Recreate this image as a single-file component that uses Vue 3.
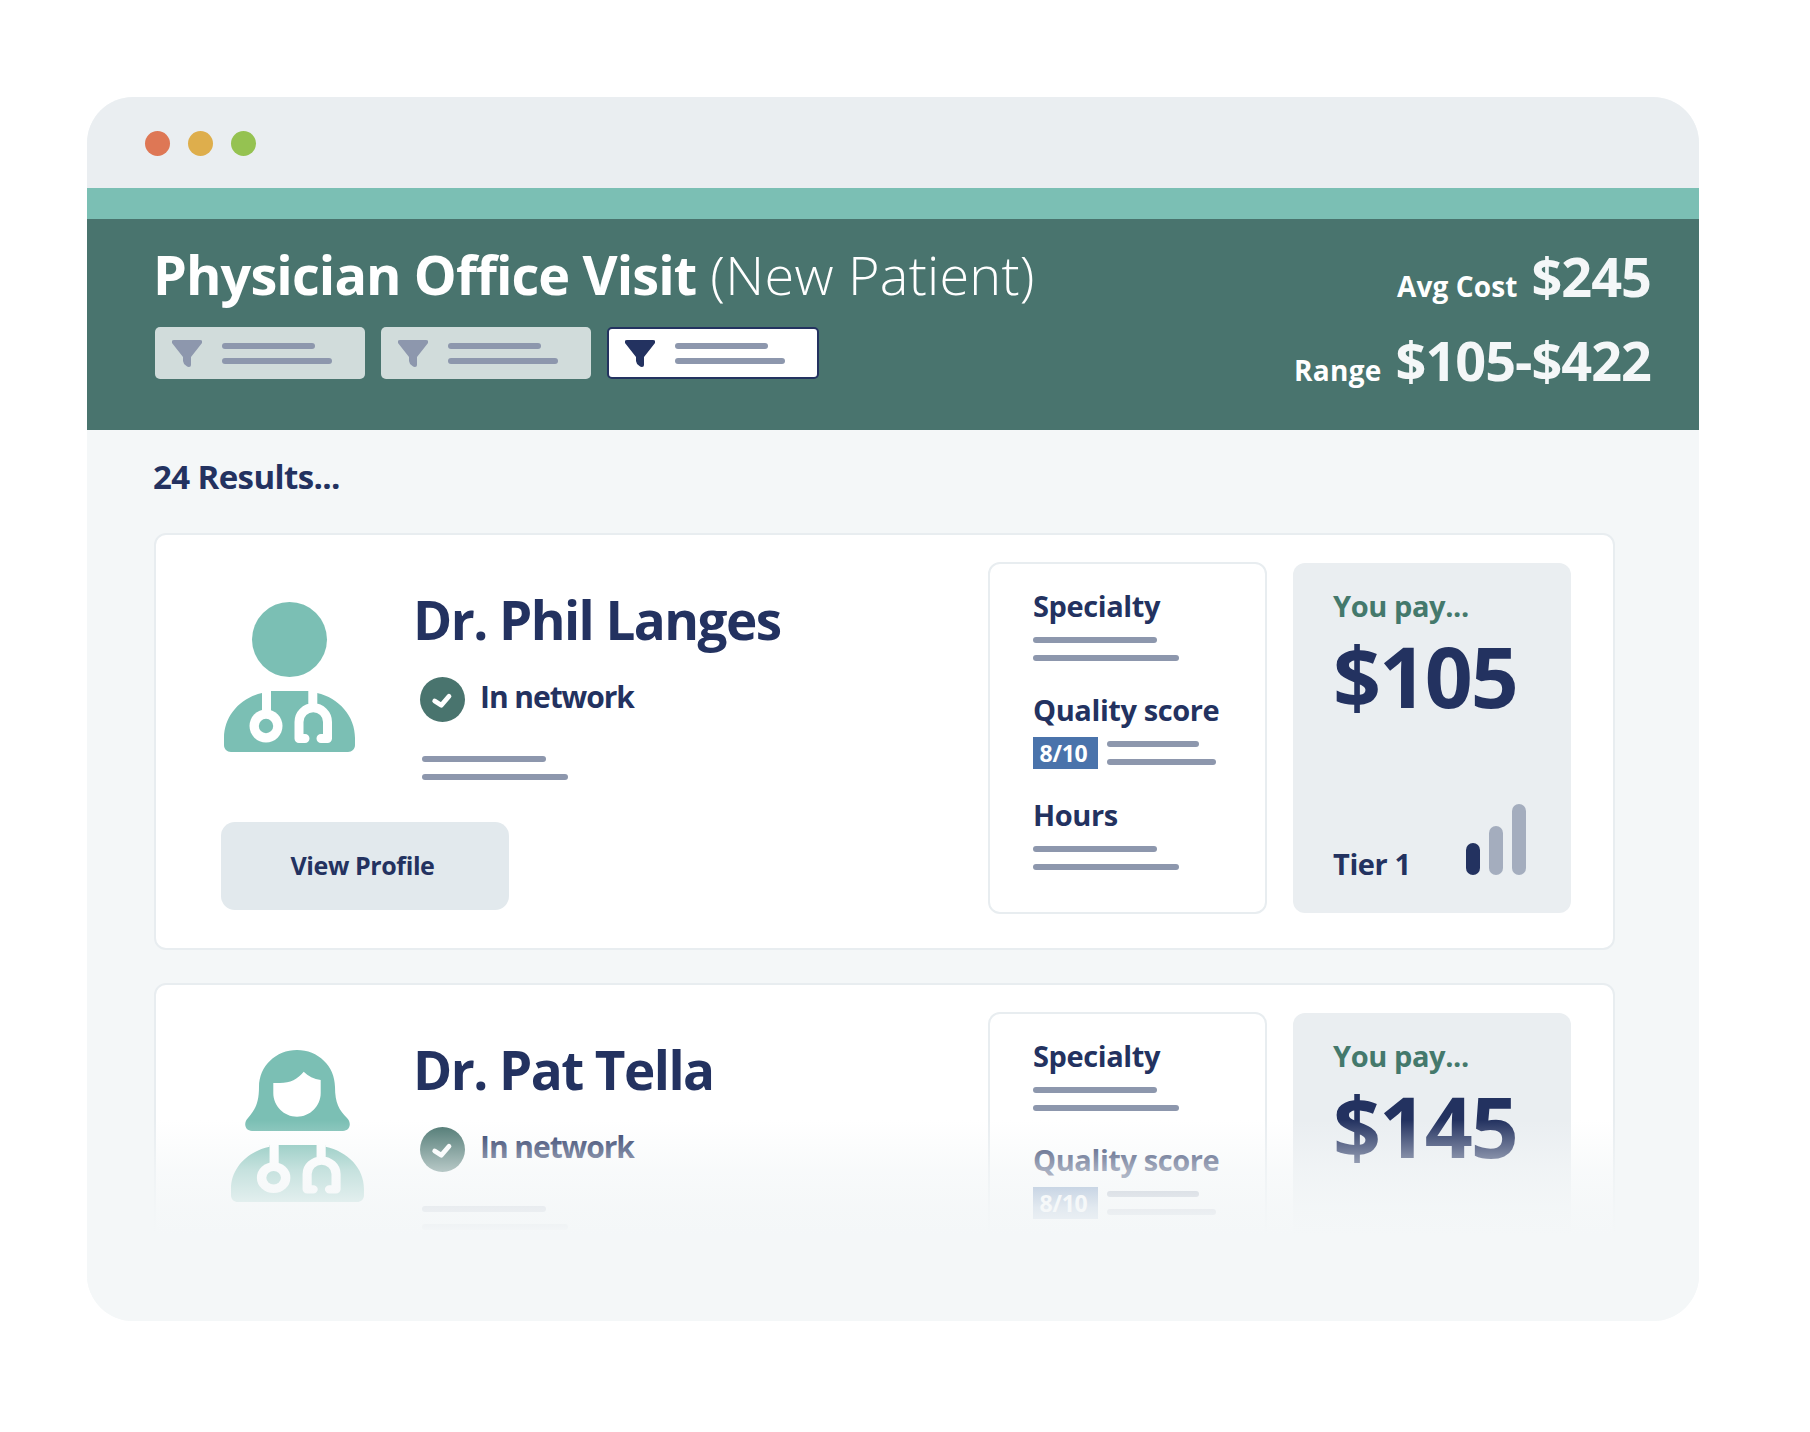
<template>
  <div class="page">
    <div class="window">
      <div class="titlebar">
        <span class="dot red"></span>
        <span class="dot amber"></span>
        <span class="dot green"></span>
      </div>
      <div class="strip"></div>

      <header class="header">
        <div class="header-left">
          <h1 class="title"><b>Physician Office Visit</b> <span>(New Patient)</span></h1>
          <div class="chips">
            <div v-for="n in 3" :key="n" class="chip" :class="{ active: n === 3 }">
              <svg class="funnel" width="30" height="27" viewBox="0 0 30 27">
                <path d="M2 0H28Q31 0 30 3L19 17V25Q19 27 17 27Q15.500 27 14.500 26Q11 23.500 11 21V17L0 3Q-1 0 2 0Z" />
              </svg>
              <div class="chip-lines">
                <i class="ln a"></i>
                <i class="ln b"></i>
              </div>
            </div>
          </div>
        </div>
        <div class="stats">
          <div class="stat one"><span>Avg Cost</span><b>$245</b></div>
          <div class="stat two"><span>Range</span><b>$105-$422</b></div>
        </div>
      </header>

      <main class="results">
        <h2 class="count">24 Results...</h2>

        <section v-for="doc in doctors" :key="doc.name" class="card">
          <div class="doc">
            <div class="doc-top">
              <svg class="avatar" width="146" height="170" :viewBox="doc.female ? '221 1040 146 170' : '221 590 146 170'">
                <template v-if="doc.female">
                  <path class="teal" d="M259 1087C259 1066 276 1050 297 1050C318 1050 335 1066 335 1087C335 1103 339 1110 347 1118C352 1123 350 1131 343 1131H252C245 1131 243 1123 248 1118C255 1110 259 1103 259 1087Z" />
                  <path class="wht" d="M273.300 1083H280C290 1083 298 1079 303.700 1071.700C308 1076 314 1079 320.700 1080V1093C320.700 1106 310 1116.700 297 1116.700C284 1116.700 273.300 1106 273.300 1093Z" />
                </template>
                <circle v-else class="teal" cx="289.500" cy="639.500" r="37.500" />
                <g :transform="doc.female ? 'translate(231 1145) scale(1.015 .934) translate(-224 -691)' : ''">
                  <path class="teal" d="M224 738C224 716 240 698 262 693V691H317V693C339 698 355 716 355 738V745C355 749 352 752 348 752H231C227 752 224 749 224 745Z" />
                  <path class="steth" d="M266.500 688V712M312.800 688V707M305 738.500H299V722A14.250 14.250 0 0 1 327.500 722V738.500H321" />
                  <circle class="wht" cx="266" cy="726" r="16.500" />
                  <circle class="teal" cx="266" cy="726" r="7.200" />
                </g>
              </svg>
              <div class="info">
                <h3 class="name">{{ doc.name }}</h3>
                <div class="network">
                  <svg width="45" height="45" viewBox="0 0 45 45">
                    <circle cx="22.500" cy="22.500" r="22.500" fill="#49746e" />
                    <path d="M14.700 24L21.300 28.300L29 19.300" fill="none" stroke="#fff" stroke-width="4.800" stroke-linecap="round" stroke-linejoin="round" />
                  </svg>
                  <span>In network</span>
                </div>
                <div class="lines">
                  <i class="ln l1"></i>
                  <i class="ln l2"></i>
                </div>
              </div>
            </div>
            <!-- the second card runs under the fade, its lower part never shows -->
            <button v-if="!doc.faded" class="profile">View Profile</button>
          </div>

          <div class="details">
            <div class="sec">
              <h4>Specialty</h4>
              <div class="lines">
                <i class="ln l1"></i>
                <i class="ln l2"></i>
              </div>
            </div>
            <div class="sec">
              <h4>Quality score</h4>
              <div class="quality">
                <span class="badge">{{ doc.score }}</span>
                <div class="lines tight">
                  <i class="ln q1"></i>
                  <i class="ln q2"></i>
                </div>
              </div>
            </div>
            <div v-if="!doc.faded" class="sec">
              <h4>Hours</h4>
              <div class="lines">
                <i class="ln l1"></i>
                <i class="ln l2"></i>
              </div>
            </div>
          </div>

          <div class="pay">
            <div class="pay-label">You pay...</div>
            <div class="pay-value">{{ doc.price }}</div>
            <div v-if="!doc.faded" class="tier">
              <span>{{ doc.tier }}</span>
              <div class="bars">
                <i class="on" style="height: 32px"></i>
                <i style="height: 49px"></i>
                <i style="height: 71px"></i>
              </div>
            </div>
          </div>
        </section>

        <div class="fade"></div>
      </main>
    </div>
  </div>
</template>

<script setup>
const doctors = [
  { name: 'Dr. Phil Langes', score: '8/10', price: '$105', tier: 'Tier 1', female: false, faded: false },
  { name: 'Dr. Pat Tella', score: '8/10', price: '$145', tier: 'Tier 1', female: true, faded: true },
]
</script>

<style>
html, body { background: #fff; }
</style>

<style scoped>
* { box-sizing: border-box; }
.page {
  width: 1810px;
  height: 1432px;
  padding: 97px 111px 0 87px;
  background: #fff;
  font-family: "Open Sans", "Liberation Sans", sans-serif;
  color: #233260;
  overflow: hidden;
}
.window {
  width: 1612px;
  height: 1224px;
  border-radius: 46px;
  overflow: hidden;
  display: flex;
  flex-direction: column;
  background: #f4f7f8;
}
.titlebar {
  height: 91px;
  background: #eaeef1;
  display: flex;
  align-items: center;
  gap: 18px;
  padding-left: 58px;
  padding-top: 2px;
}
.dot { width: 25px; height: 25px; border-radius: 50%; }
.red { background: #de7755; }
.amber { background: #deae4c; }
.green { background: #95c251; }
.strip { height: 31px; background: #7bbfb4; }

.header {
  height: 211px;
  background: #49746e;
  display: flex;
  justify-content: space-between;
  padding: 0 48px 0 68px;
  color: #fff;
}
.title {
  margin: 19px 0 0 -2px;
  font-size: 54px;
  line-height: 72px;
  font-weight: 300;
  white-space: nowrap;
}
.title b { font-weight: 700; letter-spacing: -0.9px; }
.title span { letter-spacing: 0.25px; }
.chips { display: flex; gap: 16px; margin-top: 17px; }
.chip {
  width: 210px;
  height: 52px;
  border: 2px solid transparent;
  border-radius: 5px;
  background: #d1dcdb;
  display: flex;
  align-items: center;
  gap: 20px;
  padding-left: 15px;
}
.chip.active { width: 212px; padding-left: 16px; background: #fff; border-color: #233260; }
.funnel { fill: #8d97ad; }
.chip.active .funnel { fill: #233260; }
.chip-lines { display: flex; flex-direction: column; gap: 9px; }
.ln { display: block; height: 6px; border-radius: 3px; background: #8d97ad; }
.ln.a { width: 93px; }
.ln.b { width: 110px; }

.stats { display: flex; flex-direction: column; align-items: flex-end; padding-top: 20px; }
.stat { display: flex; align-items: baseline; gap: 14px; }
.stat span { font-size: 28px; font-weight: 700; letter-spacing: 0.1px; }
.stat b { font-size: 54px; font-weight: 700; letter-spacing: -1px; color: #f4f7f8; line-height: 74px; }
.stat.two { margin-top: 10px; }
.stat.two span { letter-spacing: 0.3px; }

.results {
  flex: 1;
  position: relative;
  padding: 0 84px 0 67px;
  overflow: hidden;
}
.count {
  margin: 25px 0 0 -1px;
  font-size: 33px;
  line-height: 44px;
  font-weight: 700;
  letter-spacing: -0.6px;
}
.card {
  height: 417px;
  margin-top: 34px;
  margin-bottom: -1px;
  border: 2px solid #e8edf0;
  border-radius: 12px;
  background: #fff;
  display: flex;
  padding: 27px 42px 34px 65px;
}
.doc { flex: 1; display: flex; flex-direction: column; min-width: 0; }
.doc-top { display: flex; }
.avatar { margin-top: 28px; margin-right: 46px; flex: none; }
.teal { fill: #7bbfb4; }
.wht { fill: #fff; }
.steth { fill: none; stroke: #fff; stroke-width: 9; stroke-linecap: round; stroke-linejoin: round; }
.name {
  margin: 22px 0 0;
  font-size: 53px;
  line-height: 72px;
  font-weight: 700;
  letter-spacing: -1.55px;
}
.network {
  display: flex;
  align-items: center;
  gap: 15px;
  margin: 21px 0 0 7px;
  font-size: 30px;
  font-weight: 700;
  letter-spacing: -1.05px;
}
.network span { position: relative; top: -3px; }
.info .lines { margin: 34px 0 0 9px; }
.lines { display: flex; flex-direction: column; gap: 12px; }
.lines.tight { gap: 12px; padding-top: 4px; }
.l1 { width: 124px; }
.l2 { width: 146px; }
.q1 { width: 92px; }
.q2 { width: 109px; }
.profile {
  width: 288px;
  height: 88px;
  margin-top: auto;
  margin-bottom: 4px;
  border: 0;
  border-radius: 14px;
  background: #e2e9ed;
  color: #233260;
  font: 700 25px "Open Sans", "Liberation Sans", sans-serif;
  letter-spacing: -0.4px;
  padding: 0 5px 2px 0;
}

.details {
  width: 279px;
  margin-right: 26px;
  border: 2px solid #e8edf0;
  border-radius: 12px;
  background: #fff;
  padding: 22px 0 0 43px;
}
.sec { height: 105px; }
.sec:first-child { height: 104px; }
.sec h4 {
  margin: 0;
  font-size: 29px;
  line-height: 40px;
  font-weight: 700;
  letter-spacing: -0.4px;
}
.sec h4 + .lines { margin-top: 11px; }
.quality { display: flex; gap: 9px; margin-top: 7px; }
.badge {
  width: 65px;
  height: 32px;
  background: #4a73ab;
  color: #fff;
  font-size: 23px;
  line-height: 32px;
  font-weight: 700;
  letter-spacing: -0.3px;
  text-align: center;
  padding-right: 4px;
}

.pay {
  width: 278px;
  margin: 1px 0;
  border-radius: 12px;
  background: #eaeef1;
  display: flex;
  flex-direction: column;
  padding: 23px 45px 38px 40px;
}
.pay-label { font-size: 29px; line-height: 40px; font-weight: 700; letter-spacing: -0.4px; color: #44796c; }
.pay-value { font-size: 84px; line-height: 100px; font-weight: 700; letter-spacing: -2.1px; }
.tier { display: flex; justify-content: space-between; align-items: flex-end; margin-top: auto; }
.tier span { font-size: 29px; line-height: 40px; font-weight: 700; letter-spacing: -0.4px; margin-bottom: -9px; }
.bars { display: flex; align-items: flex-end; gap: 9px; }
.bars i { display: block; width: 14px; border-radius: 7px; background: #a4adbe; }
.bars i.on { background: #233260; }

.fade {
  position: absolute;
  left: 0;
  right: 0;
  bottom: 0;
  height: 201px;
  background: linear-gradient(to bottom,
    rgba(244, 247, 248, 0) 0,
    rgba(244, 247, 248, 0.62) 50px,
    rgba(244, 247, 248, 0.89) 87px,
    #f4f7f8 115px);
}
</style>
